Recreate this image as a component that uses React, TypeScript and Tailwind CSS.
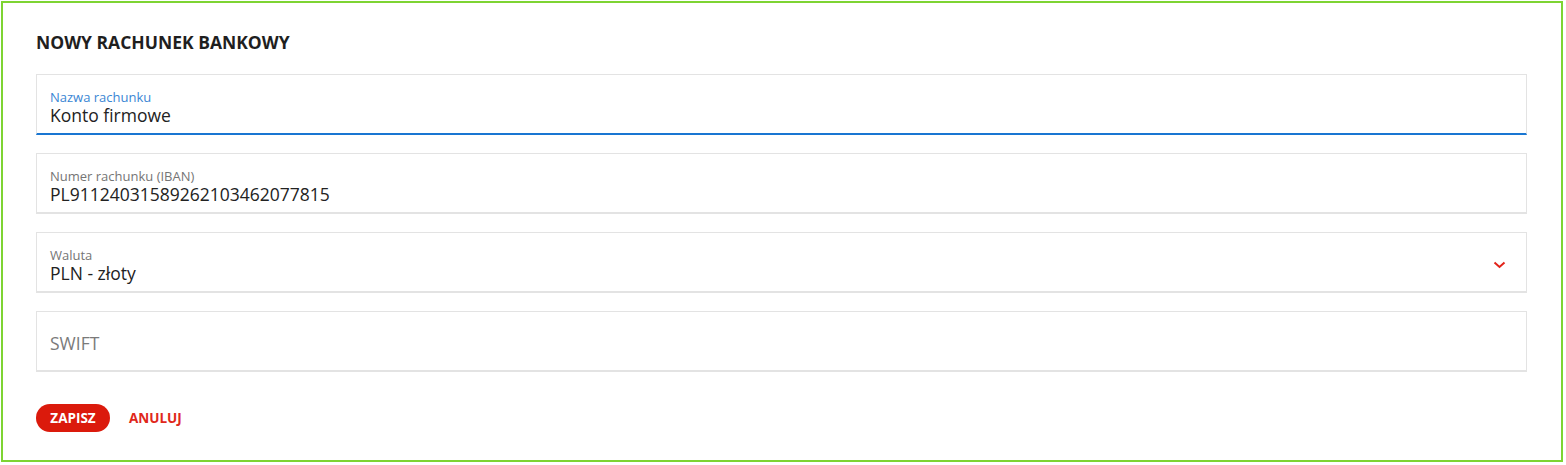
import React from 'react';

// Form card: new bank account
const font = { fontFamily: '"Open Sans", "Liberation Sans", sans-serif' };

interface FieldProps {
  label?: string;
  value?: string;
  placeholder?: string;
  focused?: boolean;
  select?: boolean;
}

const Field: React.FC<FieldProps> = ({ label, value, placeholder, focused, select }) => (
  <div
    className={`relative h-[61px] border border-b-2 border-[#e3e3e3] bg-white px-[13px] ${
      focused ? 'border-b-[#1976d2]' : ''
    }`}
  >
    {label ? (
      <div className="pt-[15px]">
        <div className={`text-[13px] leading-[14px] ${focused ? 'text-[#3a86d4]' : 'text-[#757575]'}`}>{label}</div>
        <div className="text-[17.5px] leading-[22px] text-[#222222]">{value}</div>
      </div>
    ) : (
      <div className="flex h-full items-center pt-[3px] text-[17.5px] leading-[22px] text-[#7a7a7a]">{placeholder}</div>
    )}
    {select && (
      <svg
        className="absolute right-[20px] top-[28px]"
        width="13"
        height="8"
        viewBox="0 0 13 8"
        fill="none"
      >
        <path d="M1.5 1.5 L6.5 6 L11.5 1.5" stroke="#e2231a" strokeWidth="2" />
      </svg>
    )}
  </div>
);

export default function App() {
  return (
    <div className="h-[465px] w-[1566px] bg-white p-px" style={font}>
      <div className="h-[461px] w-[1562px] border-2 border-[#7ed432] pl-[33px] pr-[34px]">
        <h1 className="mt-[27px] text-[17.5px] font-bold leading-[24px] text-[#1f1f1f]">NOWY RACHUNEK BANKOWY</h1>
        <div className="mt-[20px] flex flex-col gap-[18px]">
          <Field label="Nazwa rachunku" value="Konto firmowe" focused />
          <Field label="Numer rachunku (IBAN)" value="PL91124031589262103462077815" />
          <Field label="Waluta" value="PLN - złoty" select />
          <Field placeholder="SWIFT" />
        </div>
        <div className="mt-[32px] flex items-center gap-[19px]">
          <button
            type="button"
            className="h-[28px] w-[74px] rounded-full bg-[#db1a0c] text-[13.5px] font-bold text-white"
          >
            ZAPISZ
          </button>
          <button type="button" className="text-[13.5px] font-bold text-[#e0281b]">
            ANULUJ
          </button>
        </div>
      </div>
    </div>
  );
}
